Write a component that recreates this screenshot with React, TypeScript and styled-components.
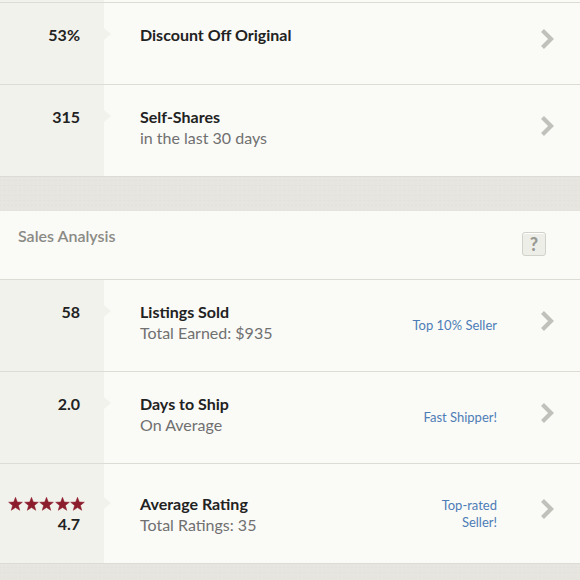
import React from "react";
import styled, { createGlobalStyle } from "styled-components";

const GlobalStyle = createGlobalStyle`
  html, body { margin: 0; padding: 0; }
  body {
    background: #e6e5df;
    font-family: "Lato", "Open Sans", sans-serif;
    -webkit-font-smoothing: antialiased;
  }
`;

const Page = styled.div`
  width: 580px;
  height: 580px;
  overflow: hidden;
  background: #e6e5df;
`;

const Card = styled.div`
  background: #fafaf7;
  border-bottom: 1px solid #dcdcd5;
`;

const Sliver = styled.div`
  height: 2px;
  display: grid;
  grid-template-columns: 104px 1fr;
  border-bottom: 1px solid #dcdcd5;
  &::before { content: ""; background: #f2f2ed; }
`;

const Row = styled.div<{ $h: number; $last?: boolean }>`
  display: grid;
  grid-template-columns: 104px 1fr;
  height: ${(p) => p.$h}px;
  border-bottom: ${(p) => (p.$last ? "none" : "1px solid #dcdcd5")};
`;

const ValueCell = styled.div<{ $pt: number }>`
  position: relative;
  background: #f2f2ed;
  padding: ${(p) => p.$pt}px 24px 0 0;
  display: flex;
  flex-direction: column;
  align-items: flex-end;
  &::after {
    content: "";
    position: absolute;
    right: -7px;
    top: ${(p) => p.$pt + 4}px;
    border-left: 7px solid #f2f2ed;
    border-top: 6px solid transparent;
    border-bottom: 6px solid transparent;
  }
`;

const Value = styled.div`
  font-size: 16px;
  line-height: 21px;
  font-weight: 700;
  color: #222;
`;

const Stars = styled.div`
  display: flex;
  gap: 0.5px;
  margin-right: -5px;
  margin-bottom: 2px;
  padding-top: 4px;
`;

const Body = styled.div`
  display: flex;
  align-items: center;
  padding: 0 26px 0 36px;
`;

const TextBlock = styled.div<{ $pt: number }>`
  align-self: flex-start;
  padding-top: ${(p) => p.$pt}px;
  flex: 1;
`;

const Title = styled.div`
  font-size: 16px;
  line-height: 21px;
  font-weight: 700;
  color: #222;
`;

const Sub = styled.div`
  font-size: 16px;
  line-height: 21px;
  color: #707070;
`;

const Badge = styled.div`
  font-size: 13px;
  line-height: 17px;
  color: #4d7db6;
  text-align: right;
  margin-right: 43px;
`;

const Chev = styled.svg`
  width: 14px;
  height: 22px;
  margin-bottom: 10px;
  flex: none;
`;

const Band = styled.div<{ $h: number }>`
  height: ${(p) => p.$h}px;
  background: #e6e5df;
  background-image: radial-gradient(rgba(255,255,255,0.12) 0.6px, transparent 0.9px),
    radial-gradient(rgba(0,0,0,0.015) 0.6px, transparent 0.9px);
  background-size: 5px 3px, 4px 5px;
  background-position: 0 0, 2px 1px;
`;

const Header = styled.div`
  height: 68px;
  display: flex;
  align-items: flex-start;
  justify-content: space-between;
  padding: 0 34px 0 18px;
  border-bottom: 1px solid #dcdcd5;
`;

const HeaderTitle = styled.div`
  padding-top: 15px;
  font-size: 16px;
  line-height: 20px;
  font-weight: 600;
  color: #8a8a85;
`;

const Help = styled.div`
  margin-top: 21px;
  width: 22px;
  height: 22px;
  border: 1px solid #d2d2cb;
  border-radius: 3px;
  background: #eeeee9;
  color: #9a9a95;
  font-size: 18px;
  font-weight: 900;
  display: flex;
  align-items: center;
  justify-content: center;
  box-shadow: inset 0 1px 0 #fff;
`;

const Chevron = () => (
  <Chev viewBox="0 0 14 22">
    <path d="M2.5 2.5 L11 11 L2.5 19.5" fill="none" stroke="#c1c1bc" strokeWidth="4.2" strokeLinejoin="miter" />
  </Chev>
);

const Star = () => (
  <svg width="15" height="14" viewBox="0 0 24 23">
    <path
      d="M12 0.5 L15 8.2 L23.3 8.6 L16.8 13.8 L19 21.9 L12 17.3 L5 21.9 L7.2 13.8 L0.7 8.6 L9 8.2 Z"
      fill="#8c1d2c"
      stroke="#8c1d2c"
      strokeWidth="0.8"
      strokeLinejoin="round"
    />
  </svg>
);

type RowData = {
  value?: string;
  title: string;
  sub?: string;
  badge?: string[];
  h: number;
  last?: boolean;
};

const StatRow = ({ value, title, sub, badge, h, last }: RowData) => (
  <Row $h={h} $last={last}>
    <ValueCell $pt={21}>
      <Value>{value}</Value>
    </ValueCell>
    <Body>
      <TextBlock $pt={21}>
        <Title>{title}</Title>
        {sub && <Sub>{sub}</Sub>}
      </TextBlock>
      {badge && (
        <Badge>
          {badge.map((b) => (
            <div key={b}>{b}</div>
          ))}
        </Badge>
      )}
      <Chevron />
    </Body>
  </Row>
);

export default function App() {
  return (
    <Page>
      <GlobalStyle />
      <Card>
        <Sliver />
        <StatRow value="53%" title="Discount Off Original" h={81} />
        <StatRow value="315" title="Self-Shares" sub="in the last 30 days" h={91} last />
      </Card>
      <Band $h={34} />
      <Card>
        <Header>
          <HeaderTitle>Sales Analysis</HeaderTitle>
          <Help>?</Help>
        </Header>
        <StatRow value="58" title="Listings Sold" sub="Total Earned: $935" badge={["Top 10% Seller"]} h={91} />
        <StatRow value="2.0" title="Days to Ship" sub="On Average" badge={["Fast Shipper!"]} h={91} />
        <Row $h={99} $last>
          <ValueCell $pt={29}>
            <Stars>
              <Star />
              <Star />
              <Star />
              <Star />
              <Star />
            </Stars>
            <Value>4.7</Value>
          </ValueCell>
          <Body>
            <TextBlock $pt={29}>
              <Title>Average Rating</Title>
              <Sub>Total Ratings: 35</Sub>
            </TextBlock>
            <Badge>
              <div>Top-rated</div>
              <div>Seller!</div>
            </Badge>
            <Chevron />
          </Body>
        </Row>
      </Card>
      <Band $h={40} />
    </Page>
  );
}
